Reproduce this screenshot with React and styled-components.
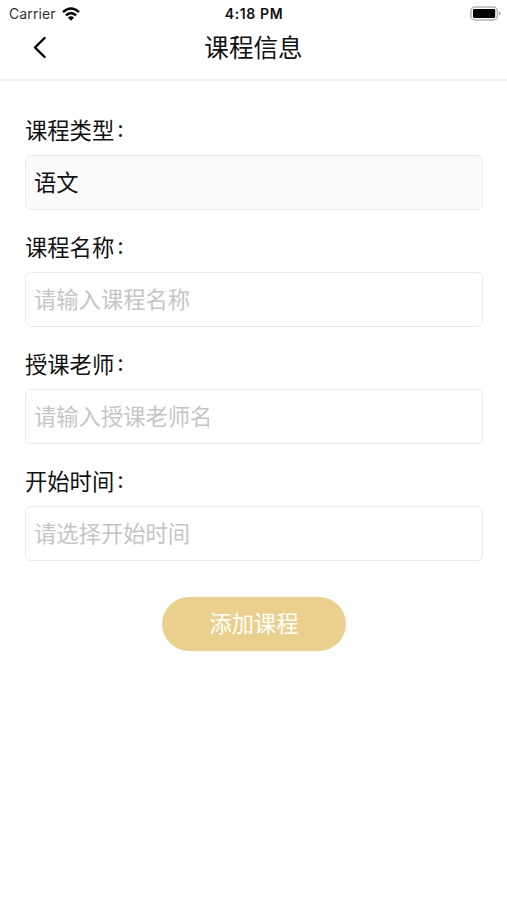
import React from "react"
import styled, { createGlobalStyle } from "styled-components"

const GlobalStyle = createGlobalStyle`
    * {
        box-sizing: border-box;
    }

    body {
        margin: 0;
        background: #fff;
        color: #111;
        font-family: "Noto Sans CJK SC", sans-serif;
    }
`

const Screen = styled.div`
    width: 100%;
    min-height: 900px;
    background: #fff;
`

const StyledStatusBar = styled.div`
    display: grid;
    grid-template-columns: 1fr auto 1fr;
    align-items: center;
    height: 27px;
    padding: 0 6px 0 9px;
    font-family: Inter, sans-serif;
    font-size: 14px;
    line-height: 27px;

    .carrier {
        display: flex;
        align-items: center;
        gap: 6px;
        color: #333;
        letter-spacing: .1px;
    }

    .time {
        padding: 1px 2px 0 0;
        color: #111;
        font-size: 14px;
        font-weight: 600;
        letter-spacing: .6px;
        line-height: 26px;
    }

    .battery {
        justify-self: end;
    }

    svg {
        display: block;
    }
`

const StyledHeader = styled.header`
    display: grid;
    grid-template-columns: 80px 1fr 80px;
    align-items: center;
    height: 54px;
    padding-bottom: 12px;
    border-bottom: 2px solid #eee;

    h1 {
        margin: -2px 0 0;
        font-size: 24.6px;
        font-weight: 400;
        line-height: 40px;
        text-align: center;
    }
`

const BackButton = styled.button`
    display: flex;
    justify-self: start;
    margin-left: 32px;
    padding: 0;
    border: none;
    background: none;
    cursor: pointer;
`

const Form = styled.form`
    display: flex;
    flex-direction: column;
    padding: 32px 24px 0 25px;
`

const Field = styled.label`
    display: block;
    height: 117px;
`

const FieldName = styled.span`
    display: flex;
    height: 42px;
    font-size: 22.3px;
    line-height: 33px;

    .colon {
        margin: -1px 0 0 3px;
        font-family: Inter, sans-serif;
    }
`

const Input = styled.input`
    display: block;
    width: 100%;
    height: 55px;
    padding: 0 8px 3px;
    border: 1px solid #ebebeb;
    border-radius: 6px;
    outline: none;
    background: ${({ readOnly }) => readOnly ? '#fafafa' : '#fff'};
    color: #111;
    font-family: inherit;
    font-size: 22.3px;

    &::placeholder {
        color: #c5c5c5;
        opacity: 1;
    }
`

const SubmitButton = styled.button`
    align-self: center;
    width: 184px;
    height: 53.5px;
    margin-top: 16px;
    padding: 0 0 3px;
    border: none;
    border-radius: 27px;
    background: #ebd08d;
    color: #fff;
    font-family: inherit;
    font-size: 22.3px;
    line-height: 50px;
    cursor: pointer;
`

const fields = [
    { label: "课程类型", value: "语文", readOnly: true },
    { label: "课程名称", placeholder: "请输入课程名称" },
    { label: "授课老师", placeholder: "请输入授课老师名" },
    { label: "开始时间", placeholder: "请选择开始时间" },
]

const StatusBar = () => (
    <StyledStatusBar>
        <div className="carrier">
            <span>Carrier</span>
            <svg width="18" height="14" viewBox="0 0 18 14">
                <g fill="none" stroke="#000" strokeWidth="2.5">
                    <path d="M1 5.1 Q9 -2 17 5.1" />
                    <path d="M3.9 8.4 Q9 3.8 14.1 8.4" />
                </g>
                <path d="M9 13.8 L5.9 10.6 Q9 8.1 12.1 10.6 Z" />
            </svg>
        </div>
        <div className="time">4:18 PM</div>
        <svg className="battery" width="31" height="16" viewBox="0 0 31 16">
            <rect x=".9" y="1" width="26.4" height="13" rx="4" fill="#fff" stroke="#b5b5b5" strokeWidth="1.5" />
            <rect x="3" y="3.1" width="22.2" height="8.8" rx="1.2" />
            <path d="M28.8 5.2 Q30.8 5.8 30.8 7.5 Q30.8 9.2 28.8 9.8 Z" fill="#b5b5b5" />
        </svg>
    </StyledStatusBar>
)

const Header = () => (
    <StyledHeader>
        <BackButton type="button" aria-label="返回">
            <svg width="15" height="23" viewBox="0 0 15 23">
                <path d="M12.6 2 L3 11.5 L12.6 21" fill="none" stroke="#000" strokeWidth="2.4" strokeLinecap="round" strokeLinejoin="round" />
            </svg>
        </BackButton>
        <h1>课程信息</h1>
    </StyledHeader>
)

const App = () => {

    return (
        <Screen>
            <GlobalStyle />
            <StatusBar />
            <Header />
            <Form onSubmit={e => e.preventDefault()}>
                {fields.map(({ label, value, placeholder, readOnly }) => (
                    <Field key={label}>
                        <FieldName>{label}<span className="colon">:</span></FieldName>
                        <Input defaultValue={value} placeholder={placeholder} readOnly={readOnly} />
                    </Field>
                ))}
                <SubmitButton type="submit">添加课程</SubmitButton>
            </Form>
        </Screen>
    );
}

export default App;
